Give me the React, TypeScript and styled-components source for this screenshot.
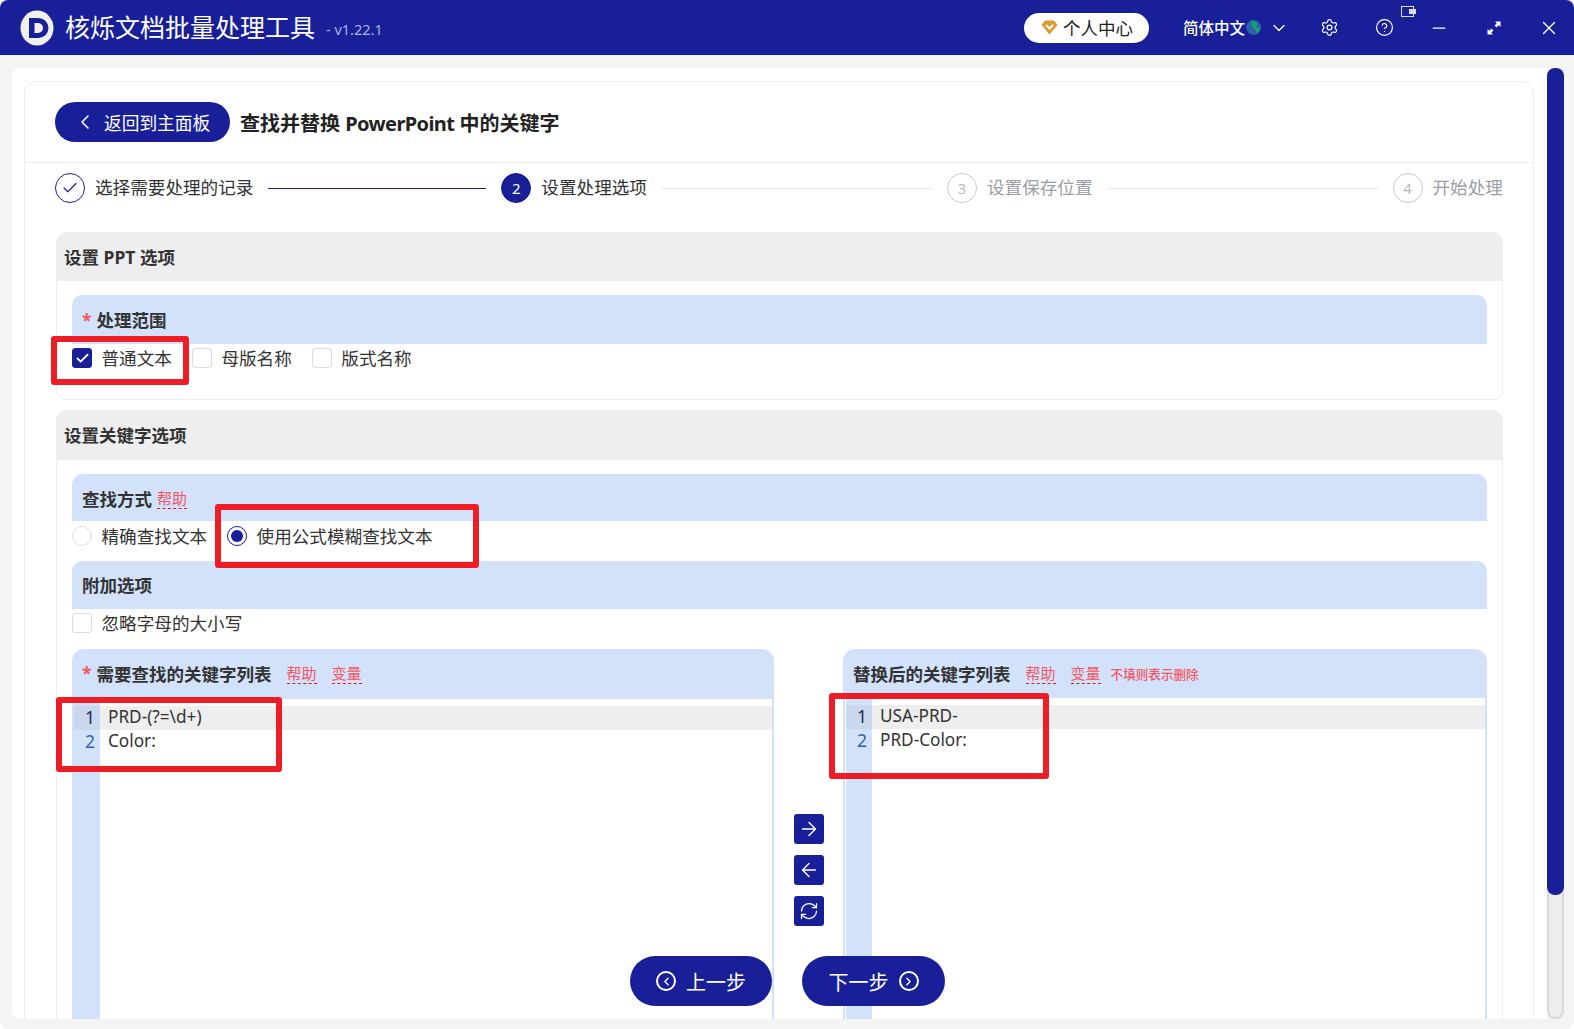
import React from 'react';
import styled, { createGlobalStyle } from 'styled-components';
import {
  ArrowLeft,
  ArrowRight,
  Check,
  ChevronDown,
  ChevronLeft,
  ChevronRight,
  CircleHelp,
  Minus,
  RefreshCw,
  Settings,
  X,
} from 'lucide-react';

const NAVY = '#181f98';
const BLUE = '#d2e2fb';

const GlobalStyle = createGlobalStyle`
  html, body {
    margin: 0;
    background: #fff;
    overflow: hidden;
  }
  body {
    font-family: "Noto Sans", "Noto Sans CJK SC", sans-serif;
    font-size: 17.5px;
    color: #333;
  }
`;

const Window = styled.div`
  width: 1574px;
  height: 1029px;
  display: flex;
  flex-direction: column;
  background: #f4f4f4;
  border-radius: 8px;
  overflow: hidden;
`;

const TitleBar = styled.header`
  height: 55px;
  flex: none;
  display: flex;
  align-items: center;
  padding-left: 20px;
  background: ${NAVY};
  color: #fff;
`;
const AppTitle = styled.h1`
  margin: 0 0 0 11px;
  font-size: 25px;
  font-weight: 400;
  line-height: 57px;
`;
const Version = styled.span`
  margin-left: 11px;
  padding-top: 3px;
  font-size: 14.5px;
  color: #aab3e2;
`;
const UserPill = styled.div`
  margin-left: auto;
  width: 125px;
  height: 30px;
  box-sizing: border-box;
  display: flex;
  align-items: center;
  padding-left: 17px;
  gap: 5px;
  background: #fff;
  border-radius: 15px;
  color: #222;
  font-size: 17.5px;
`;
const Language = styled.div`
  margin-left: 34px;
  margin-right: 15px;
  display: flex;
  align-items: center;
  font-size: 15.5px;
  font-weight: 500;
  gap: 1px;
`;
const WindowButtons = styled.div`
  display: flex;
  gap: 5px;
`;
const IconSlot = styled.div`
  position: relative;
  width: 50px;
  height: 55px;
  display: flex;
  align-items: center;
  justify-content: center;
`;
const Wallet = styled.svg`
  position: absolute;
  top: 6px;
  left: 42px;
`;

const Body = styled.div`
  flex: 1;
  min-height: 0;
  display: flex;
  padding: 13px 10px 10px 12px;
`;
const Main = styled.main`
  position: relative;
  flex: 1;
  min-width: 0;
  background: #fff;
  border-radius: 8px 0 0 8px;
  overflow: hidden;
  padding: 13px 13px 0 12px;
`;
const Card = styled.div`
  height: 1000px;
  box-sizing: border-box;
  border: 1px solid #eee;
  border-radius: 12px;
`;
const Header = styled.div`
  height: 81px;
  box-sizing: border-box;
  display: flex;
  align-items: center;
  padding-left: 30px;
  border-bottom: 1px solid #eee;
`;
const BackButton = styled.button`
  width: 175px;
  height: 40px;
  display: flex;
  align-items: center;
  padding: 0 0 0 18px;
  border: 0;
  border-radius: 20px;
  background: ${NAVY};
  color: #fff;
  font: inherit;
  font-size: 17.7px;
  gap: 7px;
`;
const PageTitle = styled.h2`
  margin: 0 0 0 10px;
  font-size: 20px;
  font-weight: 700;
  color: #222;
`;
const Latin = styled.span`
  letter-spacing: -0.6px;
`;

const Steps = styled.div`
  display: flex;
  align-items: center;
  padding: 10px 0 0 30px;
  margin-bottom: 29px;
`;
const StepCircle = styled.div<{ $state: 'done' | 'active' | 'todo' }>`
  width: 30px;
  height: 30px;
  flex: none;
  box-sizing: border-box;
  display: flex;
  align-items: center;
  justify-content: center;
  border-radius: 50%;
  font-size: 15px;
  border: 1px solid ${(p) => (p.$state === 'todo' ? '#c9c9d2' : NAVY)};
  background: ${(p) => (p.$state === 'active' ? NAVY : '#fff')};
  color: ${(p) => (p.$state === 'active' ? '#fff' : p.$state === 'done' ? NAVY : '#bbb')};
`;
const StepLabel = styled.span<{ $todo?: boolean }>`
  margin: -3px 0 0 10px;
  font-size: 17.6px;
  white-space: nowrap;
  color: ${(p) => (p.$todo ? '#9a9ea6' : '#333')};
`;
const StepLine = styled.div<{ $width: number; $done?: boolean }>`
  width: ${(p) => p.$width}px;
  height: 1px;
  margin: 0 15px;
  flex: none;
  background: ${(p) => (p.$done ? NAVY : '#e8e8ec')};
`;

const Section = styled.section<{ $bottom?: number }>`
  margin: 0 30px 10px 31px;
  border: 1px solid #eee;
  border-radius: 10px;
  padding-bottom: ${(p) => p.$bottom ?? 0}px;
  overflow: hidden;
`;
const SectionHead = styled.div<{ $height: number }>`
  height: ${(p) => p.$height}px;
  box-sizing: border-box;
  display: flex;
  align-items: center;
  padding: 0 0 2px 7px;
  background: #eee;
  font-weight: 700;
  color: #333;
`;
const SectionBody = styled.div`
  padding: 0 15px;
`;
const Bar = styled.div<{ $height: number; $top: number; $shift?: number }>`
  height: ${(p) => p.$height}px;
  margin-top: ${(p) => p.$top}px;
  box-sizing: border-box;
  display: flex;
  align-items: center;
  padding: ${(p) => Math.max(p.$shift ?? 0, 0)}px 0 ${(p) => Math.max(-(p.$shift ?? 0), 0)}px 10px;
  background: ${BLUE};
  border-radius: 10px 10px 0 0;
  font-weight: 700;
`;
const Asterisk = styled.span`
  margin-right: 5px;
  color: #f5555f;
  font-weight: 700;
`;
const HelpLink = styled.span<{ $left: number }>`
  margin-left: ${(p) => p.$left}px;
  font-size: 15px;
  font-weight: 400;
  line-height: 20px;
  color: #f5555f;
  border-bottom: 1px dashed #e8101c;
`;
const Note = styled.span`
  margin-left: 10px;
  font-size: 12.6px;
  font-weight: 500;
  color: #f5555f;
`;
const OptionRow = styled.div<{ $top: number }>`
  display: flex;
  align-items: center;
  height: 20px;
  margin-top: ${(p) => p.$top}px;
`;
const OptionLabel = styled.span<{ $right: number }>`
  margin: 0 ${(p) => p.$right}px 0 9.5px;
  padding-bottom: 2px;
  font-size: 17.6px;
  white-space: nowrap;
`;
const CheckBox = styled.span<{ $checked?: boolean }>`
  width: 20px;
  height: 20px;
  flex: none;
  box-sizing: border-box;
  display: flex;
  align-items: center;
  justify-content: center;
  border-radius: 3px;
  border: 1px solid ${(p) => (p.$checked ? NAVY : '#ddd')};
  background: ${(p) => (p.$checked ? NAVY : '#fff')};
  color: #fff;
`;
const Radio = styled.span<{ $checked?: boolean }>`
  width: 20px;
  height: 20px;
  flex: none;
  box-sizing: border-box;
  display: flex;
  align-items: center;
  justify-content: center;
  border-radius: 50%;
  border: 1px solid ${(p) => (p.$checked ? NAVY : '#ddd')};
  &::after {
    content: '';
    width: 12px;
    height: 12px;
    border-radius: 50%;
    background: ${(p) => (p.$checked ? NAVY : 'transparent')};
  }
`;

const Lists = styled.div`
  display: flex;
  margin-top: 16px;
`;
const ListPanel = styled.div<{ $grow: number }>`
  flex: ${(p) => p.$grow} 0 0;
  min-width: 0;
  height: 400px;
  box-sizing: border-box;
`;
const PanelHead = styled.div<{ $height: number; $lift?: number }>`
  height: ${(p) => p.$height}px;
  box-sizing: border-box;
  display: flex;
  align-items: center;
  padding: 0 0 ${(p) => p.$lift ?? 0}px 10px;
  background: ${BLUE};
  border-radius: 12px 12px 0 0;
  font-weight: 700;
`;
const Editor = styled.div<{ $inset?: number }>`
  height: 360px;
  display: flex;
  border-left: 2px solid ${BLUE};
  border-right: 2px solid ${BLUE};
  padding-left: ${(p) => p.$inset ?? 0}px;
`;
const Gutter = styled.div`
  width: 26px;
  flex: none;
  padding-top: 7px;
  background: ${BLUE};
`;
const LineNumber = styled.div<{ $active?: boolean }>`
  height: 24px;
  line-height: 23px;
  padding-right: 5px;
  text-align: right;
  color: ${(p) => (p.$active ? '#222b55' : '#2f62a8')};
  background: ${(p) => (p.$active ? '#c9d8ef' : 'transparent')};
`;
const Code = styled.div`
  flex: 1;
  padding-top: 7px;
  font-size: 17.2px;
`;
const CodeLine = styled.div<{ $active?: boolean }>`
  height: 24px;
  line-height: 22px;
  padding-left: 8px;
  color: #333;
  background: ${(p) => (p.$active ? '#eee' : 'transparent')};
`;
const Transfer = styled.div`
  width: 69px;
  flex: none;
  display: flex;
  flex-direction: column;
  align-items: center;
  gap: 11px;
  padding-top: 165px;
`;
const TransferButton = styled.button`
  width: 30px;
  height: 30px;
  padding: 0;
  display: flex;
  align-items: center;
  justify-content: center;
  border: 0;
  border-radius: 3px;
  background: ${NAVY};
  color: #fff;
`;

const Footer = styled.div`
  position: absolute;
  left: 618px;
  bottom: 13px;
  display: flex;
  gap: 30px;
`;
const NavButton = styled.button<{ $width: number }>`
  width: ${(p) => p.$width}px;
  height: 50px;
  display: flex;
  align-items: center;
  justify-content: center;
  gap: 10px;
  padding: 0;
  border: 0;
  border-radius: 25px;
  background: ${NAVY};
  color: #fff;
  font: inherit;
  font-size: 20px;
`;
const RoundIcon = styled.span`
  width: 20px;
  height: 20px;
  box-sizing: border-box;
  display: flex;
  align-items: center;
  justify-content: center;
  border: 2px solid #fff;
  border-radius: 50%;
`;

const Highlight = styled.div<{ $left: number; $top: number; $w: number; $h: number }>`
  position: absolute;
  left: ${(p) => p.$left}px;
  top: ${(p) => p.$top}px;
  width: ${(p) => p.$w}px;
  height: ${(p) => p.$h}px;
  box-sizing: border-box;
  border: 6.5px solid #ee1c25;
  border-radius: 3px;
`;

const Scrollbar = styled.div`
  width: 17px;
  flex: none;
  box-sizing: border-box;
  background: #eee;
  border: 2px solid #dadada;
  border-top: 0;
  border-radius: 8px;
  position: relative;
`;
const Thumb = styled.div`
  position: absolute;
  left: -2px;
  right: -2px;
  top: 0;
  height: 827px;
  background: ${NAVY};
  border-radius: 8px;
`;

function Logo() {
  return (
    <svg width="34" height="36" viewBox="0 0 34 36">
      <ellipse cx="17" cy="18" rx="16.5" ry="17.5" fill="#f0f0f2" />
      <path d="M9 8h9.500a10 10 0 0 1 0 20H9z" fill={NAVY} />
      <path d="M14.500 13h3.500a5 5 0 0 1 0 10h-3.500z" fill="#f0f0f2" />
    </svg>
  );
}

function Diamond() {
  return (
    <svg width="17" height="15" viewBox="0 0 17 15">
      <path d="M4 0.500h9l3.500 4.500-8 9.500-8-9.500z" fill="#dc9a30" />
      <path d="M5 5l3.500 3.500L12 5" fill="none" stroke="#fff" strokeWidth="2" />
    </svg>
  );
}

function Globe() {
  return (
    <svg width="15" height="15" viewBox="0 0 15 15">
      <circle cx="7.500" cy="7.500" r="7.500" fill="#2a62a8" />
      <path d="M5 0.500l5 1 2 3-2.500 1 3 3 2-1.500-1 4-3 3-1-4-3-3-1-3z" fill="#12a06a" />
    </svg>
  );
}

function Expand() {
  return (
    <svg width="14" height="14" viewBox="0 0 14 14" fill="#fff">
      <path d="M8 0.500h5.500V6l-1.800-1.800L9.500 6.400 7.600 4.500 9.800 2.300z" />
      <path d="M6 13.500H0.500V8l1.800 1.800L4.500 7.600l1.900 1.900-2.200 2.200z" />
    </svg>
  );
}

export default function App() {
  return (
    <>
      <GlobalStyle />
      <Window>
        <TitleBar>
          <Logo />
          <AppTitle>核烁文档批量处理工具</AppTitle>
          <Version>- v1.22.1</Version>
          <UserPill>
            <Diamond />
            个人中心
          </UserPill>
          <Language>
            简体中文
            <Globe />
            <ChevronDown size={20} strokeWidth={1.5} style={{ marginLeft: 7 }} />
          </Language>
          <WindowButtons>
            <IconSlot>
              <Settings size={19} strokeWidth={1.5} />
            </IconSlot>
            <IconSlot>
              <CircleHelp size={19} strokeWidth={1.5} />
              <Wallet width="16" height="12" viewBox="0 0 16 12">
                <rect x="0.500" y="0.500" width="12" height="10" fill="none" stroke="#ddd" />
                <rect x="8" y="3" width="7" height="5" fill="#ddd" />
              </Wallet>
            </IconSlot>
            <IconSlot>
              <Minus size={20} strokeWidth={1.5} />
            </IconSlot>
            <IconSlot>
              <Expand />
            </IconSlot>
            <IconSlot>
              <X size={22} strokeWidth={1.5} />
            </IconSlot>
          </WindowButtons>
        </TitleBar>

        <Body>
          <Main>
            <Card>
              <Header>
                <BackButton>
                  <ChevronLeft size={24} strokeWidth={1.5} />
                  返回到主面板
                </BackButton>
                <PageTitle>
                  查找并替换 <Latin>PowerPoint</Latin> 中的关键字
                </PageTitle>
              </Header>

              <Steps>
                <StepCircle $state="done">
                  <Check size={18} strokeWidth={1.5} />
                </StepCircle>
                <StepLabel>选择需要处理的记录</StepLabel>
                <StepLine $width={218} $done />
                <StepCircle $state="active">2</StepCircle>
                <StepLabel>设置处理选项</StepLabel>
                <StepLine $width={270} />
                <StepCircle $state="todo">3</StepCircle>
                <StepLabel $todo>设置保存位置</StepLabel>
                <StepLine $width={270} />
                <StepCircle $state="todo">4</StepCircle>
                <StepLabel $todo>开始处理</StepLabel>
              </Steps>

              <Section $bottom={31}>
                <SectionHead $height={48}>设置 PPT 选项</SectionHead>
                <SectionBody>
                  <Bar $height={49} $top={14}>
                    <Asterisk>*</Asterisk>处理范围
                  </Bar>
                  <OptionRow $top={4}>
                    <CheckBox $checked>
                      <Check size={15} strokeWidth={3} />
                    </CheckBox>
                    <OptionLabel $right={20}>普通文本</OptionLabel>
                    <CheckBox />
                    <OptionLabel $right={20}>母版名称</OptionLabel>
                    <CheckBox />
                    <OptionLabel $right={0}>版式名称</OptionLabel>
                  </OptionRow>
                </SectionBody>
              </Section>

              <Section>
                <SectionHead $height={49}>设置关键字选项</SectionHead>
                <SectionBody>
                  <Bar $height={47} $top={14} $shift={2}>
                    查找方式
                    <HelpLink $left={5}>帮助</HelpLink>
                  </Bar>
                  <OptionRow $top={5}>
                    <Radio />
                    <OptionLabel $right={20}>精确查找文本</OptionLabel>
                    <Radio $checked />
                    <OptionLabel $right={0}>使用公式模糊查找文本</OptionLabel>
                  </OptionRow>
                  <Bar $height={48} $top={15} $shift={-2}>
                    附加选项
                  </Bar>
                  <OptionRow $top={4}>
                    <CheckBox />
                    <OptionLabel $right={0}>忽略字母的大小写</OptionLabel>
                  </OptionRow>
                  <Lists>
                    <ListPanel $grow={702}>
                      <PanelHead $height={50} $lift={2}>
                        <Asterisk>*</Asterisk>需要查找的关键字列表
                        <HelpLink $left={15}>帮助</HelpLink>
                        <HelpLink $left={15}>变量</HelpLink>
                      </PanelHead>
                      <Editor>
                        <Gutter>
                          <LineNumber $active>1</LineNumber>
                          <LineNumber>2</LineNumber>
                        </Gutter>
                        <Code>
                          <CodeLine $active>PRD-(?=\d+)</CodeLine>
                          <CodeLine>Color:</CodeLine>
                        </Code>
                      </Editor>
                    </ListPanel>
                    <Transfer>
                      <TransferButton>
                        <ArrowRight size={22} strokeWidth={1.5} />
                      </TransferButton>
                      <TransferButton>
                        <ArrowLeft size={22} strokeWidth={1.5} />
                      </TransferButton>
                      <TransferButton>
                        <RefreshCw size={20} strokeWidth={1.5} />
                      </TransferButton>
                    </Transfer>
                    <ListPanel $grow={644}>
                      <PanelHead $height={49}>
                        替换后的关键字列表
                        <HelpLink $left={15}>帮助</HelpLink>
                        <HelpLink $left={15}>变量</HelpLink>
                        <Note>不填则表示删除</Note>
                      </PanelHead>
                      <Editor $inset={1}>
                        <Gutter>
                          <LineNumber $active>1</LineNumber>
                          <LineNumber>2</LineNumber>
                        </Gutter>
                        <Code>
                          <CodeLine $active>USA-PRD-</CodeLine>
                          <CodeLine>PRD-Color:</CodeLine>
                        </Code>
                      </Editor>
                    </ListPanel>
                  </Lists>
                </SectionBody>
              </Section>
            </Card>

            <Footer>
              <NavButton $width={142}>
                <RoundIcon>
                  <ChevronLeft size={13} strokeWidth={2.5} />
                </RoundIcon>
                上一步
              </NavButton>
              <NavButton $width={143}>
                下一步
                <RoundIcon>
                  <ChevronRight size={13} strokeWidth={2.5} />
                </RoundIcon>
              </NavButton>
            </Footer>

            <Highlight $left={39} $top={268} $w={138} $h={49} />
            <Highlight $left={203} $top={436} $w={264} $h={64} />
            <Highlight $left={44} $top={629} $w={226} $h={75} />
            <Highlight $left={817} $top={625} $w={220} $h={86} />
          </Main>
          <Scrollbar>
            <Thumb />
          </Scrollbar>
        </Body>
      </Window>
    </>
  );
}
